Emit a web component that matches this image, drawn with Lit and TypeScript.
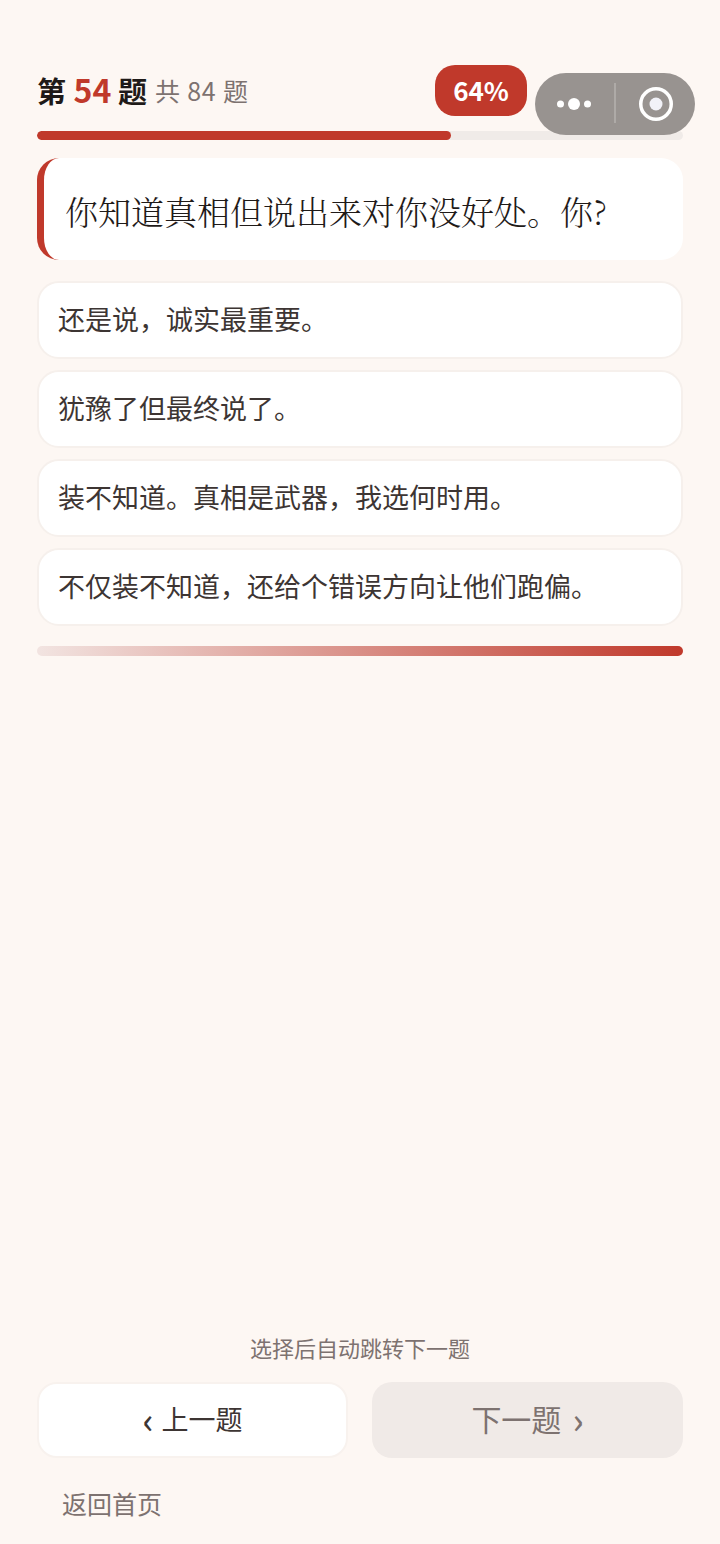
import { LitElement, html, css } from "lit";
import { customElement } from "lit/decorators.js";

const OPTIONS = [
  "还是说\uFF0C诚实最重要。",
  "犹豫了但最终说了。",
  "装不知道。真相是武器\uFF0C我选何时用。",
  "不仅装不知道\uFF0C还给个错误方向让他们跑偏。",
];

@customElement("app-root")
export class AppRoot extends LitElement {
  static styles = css`
    :host {
      display: block;
      position: relative;
      height: 1544px;
      overflow: hidden;
      background: #fdf7f3;
      font-family: "Noto Sans CJK SC", "Noto Sans", sans-serif;
      color: #3d3533;
    }
    .page {
      height: 100%;
      box-sizing: border-box;
      padding: 65px 37px 0;
      display: flex;
      flex-direction: column;
    }
    .head {
      height: 51px;
      display: flex;
      align-items: center;
      justify-content: space-between;
      padding-right: 156px;
    }
    .count {
      display: flex;
      align-items: center;
      white-space: pre;
      padding-bottom: 2px;
    }
    .title {
      font-size: 29px;
      font-weight: 700;
      color: #1f1a18;
      line-height: 40px;
    }
    .title b {
      color: #c0392b;
      font-weight: 700;
      font-size: 32px;
      margin-left: 1px;
    }
    .total {
      font-size: 25px;
      letter-spacing: 0.8px;
      color: #7d7270;
      margin-left: 8px;
      line-height: 40px;
    }
    .pct {
      width: 92px;
      height: 51px;
      box-sizing: border-box;
      padding-bottom: 2px;
      border-radius: 20px;
      background: #c0392b;
      color: #fff;
      font-size: 26px;
      font-weight: 700;
      display: flex;
      align-items: center;
      justify-content: center;
    }
    .track {
      height: 9px;
      border-radius: 5px;
      background: #f0ebe8;
      margin-top: 15px;
      overflow: hidden;
    }
    .fill {
      height: 100%;
      border-radius: 5px;
      background: #c0392b;
    }
    .question {
      margin-top: 18px;
      height: 102px;
      box-sizing: border-box;
      background: #fff;
      border-radius: 22px;
      border-left: 7px solid #c0392b;
      padding: 2px 0 0 21px;
      display: flex;
      align-items: center;
      font-family: "Noto Serif CJK SC", "DejaVu Serif", "Noto Sans CJK SC", serif;
      font-weight: 300;
      font-size: 33px;
      color: #1f1a18;
    }
    .options {
      margin-top: 21px;
      display: flex;
      flex-direction: column;
      gap: 11px;
    }
    .option {
      height: 78px;
      box-sizing: border-box;
      background: #fff;
      border: 2px solid #f6f0ec;
      border-radius: 22px;
      padding: 0 0 4px 19px;
      display: flex;
      align-items: center;
      font-size: 27px;
      color: #3d3533;
    }
    .gradient {
      margin-top: 20px;
      height: 10px;
      border-radius: 5px;
      background: linear-gradient(90deg, #f2e4e1, #c0392b);
    }
    .hint {
      margin-top: auto;
      text-align: center;
      font-size: 22px;
      line-height: 30px;
      color: #7d7270;
    }
    .buttons {
      margin-top: 20px;
      display: grid;
      grid-template-columns: 1fr 1fr;
      gap: 24px;
    }
    .btn {
      height: 76px;
      box-sizing: border-box;
      border-radius: 20px;
      display: flex;
      align-items: center;
      justify-content: center;
      padding-bottom: 4px;
      white-space: pre;
    }
    .prev {
      background: #fff;
      border: 2px solid #f8f2ee;
      font-size: 27px;
      color: #3d3533;
    }
    .next {
      background: #f0eae7;
      font-size: 30px;
      color: #7d7270;
    }
    .chev {
      font-size: 36px;
      line-height: 1;
      font-weight: 500;
    }
    .prev .chev { margin-right: 8px; }
    .next .chev { margin-left: 11px; }
    .home {
      margin-top: 27px;
      margin-bottom: 23px;
      padding-left: 25px;
      font-size: 25px;
      line-height: 36px;
      color: #7d7270;
    }
    .capsule {
      position: absolute;
      left: 535px;
      top: 73px;
      width: 160px;
      height: 62px;
      border-radius: 31px;
      background: #989390;
    }
    .capsule svg { display: block; }
    .dots { position: absolute; left: 21px; top: 21px; }
    .sep { position: absolute; left: 79px; top: 10px; width: 2px; height: 40px; background: #aeaaa7; }
    .target { position: absolute; left: 103px; top: 13px; }
  `;

  render() {
    return html`
      <div class="page">
        <div class="head">
          <div class="count">
            <span class="title">第 <b>54</b> 题</span><span class="total">共 84 题</span>
          </div>
          <div class="pct">64%</div>
        </div>
        <div class="track"><div class="fill" style="width:64.1%"></div></div>
        <div class="question">你知道真相但说出来对你没好处。你?</div>
        <div class="options">
          ${OPTIONS.map((o) => html`<div class="option">${o}</div>`)}
        </div>
        <div class="gradient"></div>
        <div class="hint">选择后自动跳转下一题</div>
        <div class="buttons">
          <div class="btn prev"><span class="chev">‹</span><span>上一题</span></div>
          <div class="btn next"><span>下一题</span><span class="chev">›</span></div>
        </div>
        <div class="home">返回首页</div>
      </div>
      <div class="capsule">
        <svg class="dots" width="36" height="20" viewBox="0 0 36 20">
          <circle cx="4.500" cy="10" r="3.500" fill="#fff"/>
          <circle cx="18" cy="10" r="6" fill="#fff"/>
          <circle cx="31.500" cy="10" r="3.500" fill="#fff"/>
        </svg>
        <div class="sep"></div>
        <svg class="target" width="36" height="36" viewBox="0 0 36 36">
          <circle cx="18" cy="18" r="15.250" fill="none" stroke="#fff" stroke-width="3.500"/>
          <circle cx="18" cy="18" r="6.500" fill="#f2f2f8"/>
        </svg>
      </div>
    `;
  }
}
